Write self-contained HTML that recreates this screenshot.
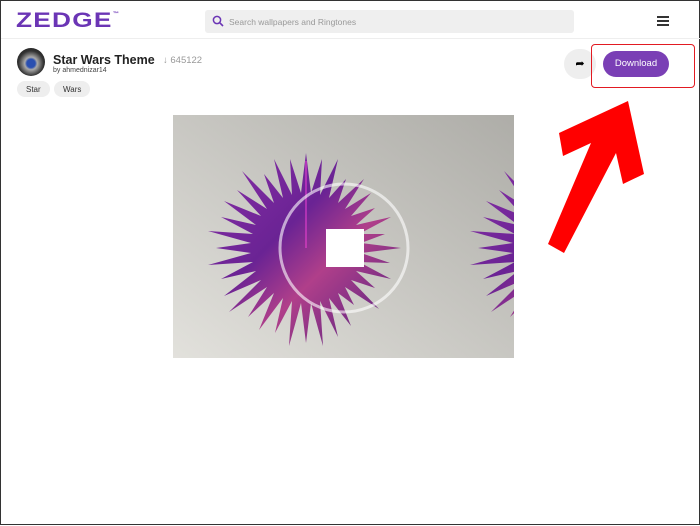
<!DOCTYPE html>
<html><head><meta charset="utf-8"><style>
*{margin:0;padding:0;box-sizing:border-box}
body{width:700px;height:525px;background:#fff;font-family:"Liberation Sans",sans-serif;position:relative;overflow:hidden;border:1px solid #333}
.hdr{position:absolute;left:0;top:0;width:700px;height:38px;border-bottom:1px solid #eee}
.logo{position:absolute;left:15px;top:8px;font-size:21px;font-weight:bold;color:#6b35b5;letter-spacing:1px;transform:scaleX(1.25);transform-origin:left}
.logo sup{font-size:5px;vertical-align:top;position:relative;top:2px}
.search{position:absolute;left:204px;top:9px;width:369px;height:23px;background:#efefef;border-radius:3px;font-size:8.5px;color:#999;padding:7px 0 0 24px}
.menu{position:absolute;left:656px;top:15px;width:12px}
.menu i{display:block;height:1.6px;background:#333;margin-bottom:2.6px}
.av{position:absolute;left:16px;top:47px;width:28px;height:28px;border-radius:50%;background:radial-gradient(circle at 50% 55%,#2a4fb0 0 20%,#aaa 30%,#333 60%,#111)}
.title{position:absolute;left:52px;top:52px;font-size:12.5px;color:#222;font-weight:bold}
.cnt{position:absolute;left:162px;top:54px;font-size:9.5px;color:#999}
.by{position:absolute;left:52px;top:66px;font-size:7px;color:#444}
.tag{position:absolute;top:80px;height:16px;border-radius:8px;background:#eee;font-size:8px;color:#333;padding:4px 9px 0}
.share{position:absolute;left:563px;top:48px;width:32px;height:30px;border-radius:15px;background:#eee;font-size:11px;text-align:center;line-height:30px}
.dl{position:absolute;left:602px;top:50px;width:66px;height:26px;border-radius:13px;background:#7a3fb5;color:#fff;font-size:9.5px;text-align:center;line-height:26px}
.box{position:absolute;left:590px;top:43px;width:104px;height:44px;border:1.5px solid #e21a22;border-radius:4px}
</style></head><body>
<div class="hdr">
<div class="logo">ZEDGE<sup>™</sup></div>
<div class="search">Search wallpapers and Ringtones</div>
<svg style="position:absolute;left:211px;top:14px" width="12" height="12" viewBox="0 0 12 12"><circle cx="5" cy="5" r="3.6" fill="none" stroke="#6b35b5" stroke-width="1.5"/><path d="M7.7 7.7L11 11" stroke="#6b35b5" stroke-width="1.6"/></svg>
<div class="menu"><i></i><i></i><i></i></div>
</div>
<div class="av"></div>
<div class="title">Star Wars Theme</div>
<div class="cnt">↓ 645122</div>
<div class="by">by ahmednizar14</div>
<div class="tag" style="left:16px">Star</div>
<div class="tag" style="left:53px">Wars</div>
<div class="share">➦</div>
<div class="dl">Download</div>
<div class="box"></div>
<svg style="position:absolute;left:0;top:0" width="700" height="525">
<defs>
<linearGradient id="bg" x1="0" y1="1" x2="1" y2="0"><stop offset="0" stop-color="#e2e1dc"/><stop offset="1" stop-color="#aeada8"/></linearGradient>
<linearGradient id="pg" x1="0" y1="0" x2="1" y2="1"><stop offset="0" stop-color="#8a2fa8"/><stop offset=".4" stop-color="#6a2394"/><stop offset=".6" stop-color="#b03f8a"/><stop offset="1" stop-color="#4a1f80"/></linearGradient>
<clipPath id="c"><rect x="172" y="114" width="341" height="243"/></clipPath>
<polygon id="st" points="400,247 360,252 389,262 358,261 390,278 355,270 374,287 350,279 378,308 344,286 353,304 337,292 350,325 328,297 337,336 319,300 322,345 310,302 305,342 300,302 288,345 291,300 274,332 282,297 258,329 273,292 247,316 266,286 228,311 260,279 223,295 255,270 220,278 252,261 207,264 250,252 215,247 250,242 207,230 252,233 220,216 255,224 223,200 260,215 236,189 266,208 241,170 273,202 263,173 282,197 273,158 291,194 289,158 300,192 305,152 310,192 321,158 319,194 337,158 328,197 345,178 337,202 363,178 344,208 370,192 350,215 374,207 355,224 390,216 358,233 384,233 360,242"/>
</defs>
<g clip-path="url(#c)">
<rect x="172" y="114" width="341" height="243" fill="url(#bg)"/>
<use href="#st" fill="url(#pg)"/>
<use href="#st" fill="url(#pg)" transform="translate(262,0)"/>
<line x1="305" y1="160" x2="305" y2="247" stroke="#f4d" stroke-width="1.5" opacity=".6"/>
</g>
<circle cx="343" cy="247" r="64" fill="none" stroke="#fff" stroke-opacity=".6" stroke-width="3"/>
<rect x="325" y="228" width="38" height="38" fill="#fff"/>
<polygon points="627,100 643,173 622,183 615,152 563,252 547,243 590,142 562,155 558,132" fill="#f00"/>
</svg>
</body></html>
